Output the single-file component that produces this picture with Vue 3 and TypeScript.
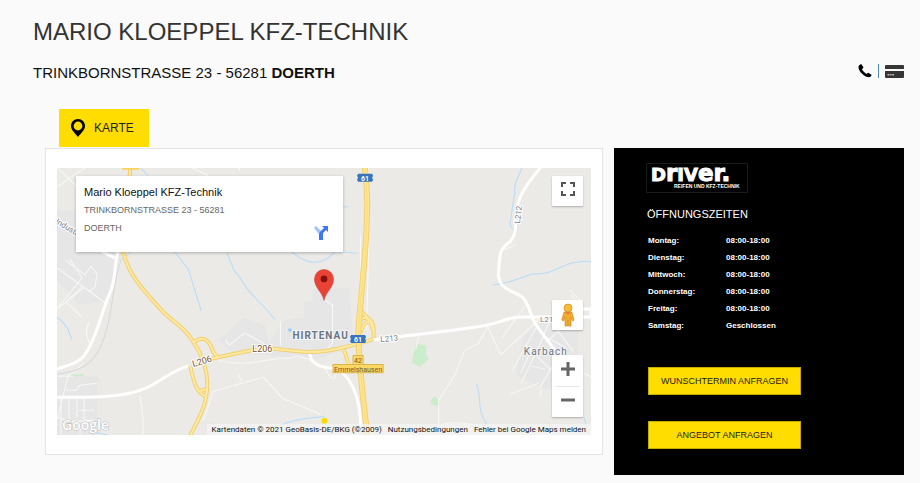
<script setup lang="ts">
interface OpeningTime {
  day: string
  time: string
}

const openingTimes: OpeningTime[] = [
  { day: 'Montag:', time: '08:00-18:00' },
  { day: 'Dienstag:', time: '08:00-18:00' },
  { day: 'Mittwoch:', time: '08:00-18:00' },
  { day: 'Donnerstag:', time: '08:00-18:00' },
  { day: 'Freitag:', time: '08:00-18:00' },
  { day: 'Samstag:', time: 'Geschlossen' },
]

const yellowRoads: string[] = [
  'M130 166C131 190 117 225 123 252C129 277 145 292 163 312C174 323 183 326 192 340C201 353 207 367 207 383C207 406 198 419 189 437',
  'M194 342C202 335 208 340 211 347C213 354 215 354 218 358',
  'M190 366C193 377 194 391 205 396M198 391L206 389',
  'M196 362C210 359 227 355 253 350C270 346 284 351 307 352C329 352 350 346 373 339',
  'M360 310C365 319 373 317 373 330V338M359 321C366 312 371 323 372 330M360 332C364 321 369 318 373 327',
  'M343 350C348 356 343 366 358 369',
]

const whiteRoads: string[] = [
  'M57 397H83C105 397 122 396 137 391C156 387 168 371 188 366',
  'M57 369C68 365 80 363 86 353C99 332 100 315 111 290C116 276 114 265 118 252',
  'M57 219C75 234 96 250 115 258',
  'M372 340C410 334 450 332 487 325C504 321 510 316 527 317H590V309H576',
  'M541 166C527 183 517 196 516 211C513 222 518 232 509 242C499 249 499 253 498 269C495 291 513 290 521 297C530 304 527 315 538 329L554 350',
  'M309 350C309 364 319 367 331 368C350 371 361 399 360 430',
]

const minorRoads: string[] = [
  'M57 187L85 168M57 168L96 204M57 268L92 293L105 303M65 260L85 275L91 266L97 274L95 287L89 292M57 309L82 278L70 259M57 309L84 288M82 287L66 302L82 317M89 322C83 336 89 339 90 345',
  'M57 376H73M57 420L68 376L84 363M61 399V434M69 398V421H95M77 398V417M84 397V420H94M66 390H76L80 385L97 383M79 410L94 410M57 417L80 424V434',
  'M140 395L143 420V435M203 420L213 391L263 377L282 398L320 414M238 374L241 381',
  'M225 340L229 345L244 333L263 343V351M218 360C246 368 266 358 289 358L296 356C307 358 319 363 326 370C329 379 336 382 336 370',
  'M323 299L332 305V343L326 350M280 321V346',
  'M360 235V275L357 305M368 168V250L366 330M192 168L208 176M239 168V171',
  'M418 335L415 349M487 327L500 355M487 327L477 344L464 350L454 375L438 400V427M435 427C451 419 464 424 479 425M569 290L580 301M500 251L515 245',
  'M500 355L538 319M525 305L501 338M535 328L511 371M551 315L540 342L520 384M552 324L572 351M570 320L545 342M570 295L582 309M543 336L564 347L551 367L539 387M524 344L549 369M509 394L538 383M531 348L520 373M563 350L552 371M540 389V397M530 366L544 369M576 369L590 377',
]

const streams: string[] = [
  'M140 168L148 176M173 250L188 269L201 311M226 251L234 271L240 278C248 294 257 298 275 320M289 250C305 265 321 267 334 252C344 251 352 254 357 253',
  'M341 207H348M521 168C516 181 513 184 514 193C511 208 510 222 509 224C510 230 514 229 514 231',
  'M492 285C507 284 516 279 531 274C550 275 557 267 571 263C580 262 585 260 590 262',
  'M476 384C482 404 475 407 486 424M583 417L586 428M57 317C66 324 68 328 72 340M213 423V435M280 425C297 418 304 419 324 416M95 432L108 435',
]
</script>

<template>
  <main class="page">
    <header class="heading">
      <h1>MARIO KLOEPPEL KFZ-TECHNIK</h1>
      <div class="subline">
        <p class="address">TRINKBORNSTRASSE 23 - 56281 <strong>DOERTH</strong></p>
        <div class="tools">
          <a href="#" aria-label="Telefon">
            <svg width="14" height="14" viewBox="0 0 14 14"><path d="M1.2 1.2C2.4.2 3.4-.1 3.8.7L5.3 3.2C5.7 3.9 4.4 4.6 3.9 5.1C4.8 7.2 6.6 9 8.7 9.9C9.3 9.5 9.9 8.4 10.7 8.9L13.1 10.4C13.9 10.9 13.4 11.8 12.8 12.5C11 14.4 6.3 12.3 4.1 9.8C1.7 7.4-.8 3.3 1.2 1.2Z" /></svg>
          </a>
          <span class="divider"></span>
          <a href="#" aria-label="Zahlungsarten">
            <svg width="19" height="13" viewBox="0 0 19 13"><path fill="#363636" d="M1 0h17q1 0 1 1v3H0V1q0-1 1-1ZM0 6h19v6q0 1-1 1H1q-1 0-1-1Z" /><path stroke="#bbb" stroke-width="1.5" d="M2.5 9.8h2M5.2 9.8h1.5M7.3 9.8H9" /></svg>
          </a>
        </div>
      </div>
    </header>

    <div class="columns">
      <section class="map-column">
        <button class="tab" type="button">
          <svg width="14" height="18" viewBox="0 0 14 18"><path fill-rule="evenodd" d="M7 0C3 0 0 3 0 7C0 11 4 14 7 18C10 14 14 11 14 7C14 3 11 0 7 0ZM7 2.6A4.4 4.4 0 1 1 7 11.4A4.4 4.4 0 1 1 7 2.6Z" /></svg>
          KARTE
        </button>
        <div class="map-card">
          <div class="map">
            <svg class="terrain" viewBox="57 168 533 267" preserveAspectRatio="xMidYMid slice">
              <path fill="#ebeae7" d="M57 168h533v267H57z" />
              <g fill="#e6e6e6">
                <path d="M57 210L100 216L123 252L105 301L80 305L57 280ZM57 376H98V435H57ZM218 341L243 318L265 325L268 344L284 320L304 318V301H312V289L349 288L353 347L314 360L290 357L232 353Z" />
                <path d="M522 337L551 313L577 328V384L545 389L515 375Z" />
              </g>
              <path fill="#cbedcc" d="M415 343L426 346L425 354L428 359L419 367L411 363ZM430 400L434 396L438 400V406L430 404ZM71 374h13v2H71Z" />
              <path v-for="d in streams" :key="d" class="stream" :d="d" />
              <path v-for="d in minorRoads" :key="d" class="minor" :d="d" />
              <path class="rail" d="M138 246L121 260C112 284 113 310 106 331C100 354 90 371 57 374" />
              <path v-for="d in whiteRoads" :key="d" class="white-road" :d="d" />
              <path v-for="d in yellowRoads" :key="d" class="road-edge" :d="d" />
              <path v-for="d in yellowRoads" :key="`${d}-fill`" class="road-fill" :d="d" />
              <path class="motorway-edge" d="M364 166C371 212 362 273 358 327C357 352 361 388 367 437" />
              <path class="motorway" d="M364 166C371 212 362 273 358 327C357 352 361 388 367 437" />
              <path class="motorway-line" d="M364 166C371 212 362 273 358 327C357 352 361 388 367 437" />
              <path fill="#f9d35e" d="M122 168h17v2h-17z" />
              <circle cx="289.500" cy="330" r="1.800" fill="#91ccff" />
              <g class="road-label">
                <text x="0" y="0" transform="translate(193 367) rotate(-17)">L206</text>
                <text x="252" y="352">L206</text>
                <text class="gray" transform="translate(380 342) rotate(-5)">L213</text>
                <text class="gray" x="539" y="322">L21</text>
                <text class="gray" transform="translate(519 224) rotate(-83)">L212</text>
                <text class="gray" transform="translate(55 223) rotate(32)">Industr.</text>
              </g>
              <text class="place bold" x="292" y="339">HIRTENAU</text>
              <text class="place" x="523" y="355">Karbach</text>
              <g class="shield">
                <path d="M357.500 174h14l1 2-1 2 1 2-1 2h-14l-1-2 1-2-1-2ZM350.500 335h14l1 2-1 2 1 2-1 2h-14l-1-2 1-2-1-2Z" />
                <text x="364.500" y="181">61</text>
                <text x="357.500" y="342">61</text>
              </g>
              <g class="exit">
                <path d="M352.500 355.500h10v9h-10zM332.500 364.500h50v8h-50z" />
                <text x="357.500" y="363">42</text>
                <text x="357.500" y="371.500">Emmelshausen</text>
              </g>
              <path fill="#ea4335" stroke="#c5372d" stroke-width=".5" d="M323.500 300.500C322 292 314 288 314 279A9.500 9.500 0 0 1 333 279C333 288 325 292 323.500 300.500Z" />
              <circle cx="323.500" cy="279" r="3.400" fill="#811411" />
              <circle cx="324" cy="420.500" r="3" fill="#ffdc00" />
              <text class="google" x="62" y="430">Google</text>
            </svg>

            <article class="info">
              <h2>Mario Kloeppel KFZ-Technik</h2>
              <p>TRINKBORNSTRASSE 23 - 56281</p>
              <p>DOERTH</p>
              <a class="directions" href="#" aria-label="Route">
                <svg width="14" height="14" viewBox="0 0 14 14"><path fill="#a1c2fa" d="M0 2L2 0L7 5L5 8Z" /><path fill="#3b78f7" d="M8 0H14V6L12 4L9 7V14H5V8Q5 6 10 2Z" /></svg>
              </a>
            </article>

            <button class="control fullscreen" type="button" aria-label="Vollbild">
              <svg width="14" height="14" viewBox="0 0 14 14" fill="none" stroke="#555" stroke-width="2"><path d="M1 5V1H5M9 1H13V5M13 9V13H9M5 13H1V9" /></svg>
            </button>
            <div class="lower-controls">
              <button class="control" type="button" aria-label="Street View">
                <svg width="14" height="24" viewBox="0 0 14 24"><path fill="#f2ad2e" stroke="#d18b20" stroke-width=".7" d="M3 9L10.800 9L13 17L11.500 18L10 14V23H7.500L7 17L6.500 23H4V14L2.500 18L.8 17Z" /><circle cx="7" cy="5" r="4" fill="#fbb936" stroke="#ca8b28" stroke-width=".7" /><path fill="#ef7d32" d="M4 9H10L7 12Z" /></svg>
              </button>
              <div class="zoom">
                <button type="button" aria-label="Vergrößern"><svg width="14" height="14" viewBox="0 0 14 14"><path d="M5.500 0h3v5.500H14v3H8.500V14h-3V8.500H0v-3h5.500Z" /></svg></button>
                <button type="button" aria-label="Verkleinern"><svg width="14" height="14" viewBox="0 0 14 14"><path d="M0 5.500h14v3H0Z" /></svg></button>
              </div>
            </div>
            <footer class="credits">
              <span>Kartendaten © 2021 GeoBasis-DE/BKG (©2009)</span>
              <a href="#">Nutzungsbedingungen</a>
              <a href="#">Fehler bei Google Maps melden</a>
            </footer>
          </div>
        </div>
      </section>

      <aside class="sidebar">
        <svg class="logo" width="102" height="30" viewBox="0 0 102 30" role="img" aria-label="Driver Reifen und KFZ-Technik">
          <path class="logo-frame" d="M.5.500h101v29H.500Z" />
          <text class="wordmark" x="5" y="18">D<tspan class="low">r</tspan>IV<tspan class="low">er.</tspan></text>
          <text class="tagline" x="28" y="25">REIFEN UND KFZ-TECHNIK</text>
        </svg>
        <h2>ÖFFNUNGSZEITEN</h2>
        <table>
          <tbody>
            <tr v-for="entry in openingTimes" :key="entry.day">
              <th scope="row">{{ entry.day }}</th>
              <td>{{ entry.time }}</td>
            </tr>
          </tbody>
        </table>
        <div class="actions">
          <button type="button">WUNSCHTERMIN ANFRAGEN</button>
          <button type="button">ANGEBOT ANFRAGEN</button>
        </div>
      </aside>
    </div>
  </main>
</template>

<style>
body {
  background: #fafafa;
}
</style>

<style scoped>
* {
  box-sizing: border-box;
}
.page {
  padding: 16px 16px 8px 33px;
  font-family: "Liberation Sans", Arial, sans-serif;
  color: #111;
}
h1, h2, p {
  margin: 0;
  font-weight: 400;
}
h1 {
  font-size: 24px;
  line-height: 32px;
  color: #333;
}
button {
  border: 0;
  padding: 0;
  font-family: inherit;
  cursor: pointer;
}
svg {
  display: block;
}
.subline {
  display: flex;
  justify-content: space-between;
  align-items: flex-start;
  padding-top: 13px;
}
.address {
  font-size: 15px;
  line-height: 24px;
}
.tools {
  display: flex;
  align-items: center;
  gap: 6px;
  padding-top: 3px;
}
.tools a {
  color: #000;
}
.divider {
  width: 1px;
  height: 14px;
  background: #4b87b9;
}
.columns {
  display: grid;
  grid-template-columns: minmax(0, 558fr) minmax(0, 290fr);
  gap: 11px;
  padding: 24px 0 0 12px;
  align-items: start;
}
.tab {
  display: flex;
  align-items: center;
  gap: 9px;
  height: 38px;
  margin: 0 0 1px 14px;
  padding: 0 15px 0 12px;
  background: #fd0;
  color: #222;
  font-size: 12px;
}
.map-card {
  padding: 19px 11px;
  border: 1px solid #e3e3e3;
  background: #fff;
}
.map {
  position: relative;
  aspect-ratio: 534 / 267;
  overflow: hidden;
}
.terrain {
  position: absolute;
  inset: 0;
  width: 100%;
  height: 100%;
  font-family: Roboto, sans-serif;
}
.terrain path {
  stroke-linejoin: round;
}
.stream, .minor, .rail, .white-road, .road-edge, .road-fill, .motorway, .motorway-edge, .motorway-line {
  fill: none;
}
.stream {
  stroke: #b5dcf8;
  stroke-width: 1;
}
.minor {
  stroke: #f8f8f6;
  stroke-width: 1;
}
.rail {
  stroke: #d5d7da;
  stroke-width: 1;
}
.white-road {
  stroke: #fff;
  stroke-width: 3;
}
.road-edge {
  stroke: #f1d06f;
  stroke-width: 4;
}
.road-fill {
  stroke: #ffe9a0;
  stroke-width: 2;
}
.motorway-edge {
  stroke: #f0d075;
  stroke-width: 6;
}
.motorway {
  stroke: #ffe58b;
  stroke-width: 4;
}
.motorway-line {
  stroke: #f8dc82;
  stroke-width: 1;
}
.road-label {
  font-size: 9px;
  fill: #7b552d;
  stroke: #fff;
  stroke-width: 2px;
  paint-order: stroke;
}
.road-label .gray {
  font-size: 8px;
  fill: #77818d;
}
.place {
  font-size: 10px;
  letter-spacing: 1px;
  fill: #687584;
  stroke: #f4f4f4;
  stroke-width: 2px;
  paint-order: stroke;
}
.bold {
  font-weight: 700;
}
.shield path {
  fill: #3974bd;
}
.shield text {
  font-size: 7px;
  font-weight: 700;
  fill: #fff;
  text-anchor: middle;
}
.exit path {
  fill: #fbd763;
  stroke: #d9b64d;
}
.exit text {
  font-size: 7px;
  fill: #755b25;
  text-anchor: middle;
}
.google {
  font-family: "Open Sans", sans-serif;
  font-size: 14px;
  font-weight: 600;
  fill: #fff;
  stroke: #bbb;
  stroke-width: 1px;
  paint-order: stroke;
}
.info {
  position: absolute;
  top: 8px;
  left: 19px;
  width: 267px;
  height: 76px;
  padding: 7px 8px;
  background: #fff;
  box-shadow: 0 1px 3px #0004;
}
.info h2 {
  font-size: 11px;
  line-height: 18px;
  color: #111;
}
.info p {
  font-size: 9px;
  line-height: 18px;
  color: #666;
}
.directions {
  position: absolute;
  right: 15px;
  bottom: 12px;
}
.control, .zoom {
  display: grid;
  width: 31px;
  place-items: center;
  background: #fff;
  border-radius: 1px;
  box-shadow: 0 1px 2px #0004;
}
.control {
  height: 30px;
}
.fullscreen {
  position: absolute;
  top: 8px;
  right: 8px;
  padding-bottom: 4px;
}
.lower-controls {
  position: absolute;
  right: 8px;
  bottom: 18px;
  display: grid;
  gap: 25px;
}
.zoom button {
  display: grid;
  place-items: center;
  width: 23px;
  height: 31px;
  padding-bottom: 4px;
  background: transparent;
  fill: #666;
}
.zoom button + button {
  border-top: 1px solid #e6e6e6;
}
.credits {
  position: absolute;
  right: 0;
  bottom: 0;
  display: flex;
  gap: 6px;
  padding: 0 5px;
  background: #f5f5f5b3;
  font-family: Roboto, sans-serif;
  font-size: 8px;
  line-height: 11px;
  white-space: nowrap;
}
.credits a {
  color: inherit;
  text-decoration: none;
}
.sidebar {
  margin-top: 39px;
  padding: 15px 32px 26px 32px;
  background: #000;
  color: #fff;
}
.logo {
  overflow: visible;
}
.logo-frame {
  fill: none;
  stroke: #1b1b1b;
}
.wordmark {
  font: 700 18px "DejaVu Sans", sans-serif;
  fill: #fff;
  stroke: #fff;
  stroke-width: 1px;
}
.low {
  font-size: 23px;
}
.tagline {
  font: 700 5px "Liberation Sans", sans-serif;
  fill: #fff;
}
.sidebar h2 {
  padding: 12px 0 9px 1px;
  font-size: 11px;
  line-height: 18px;
}
table {
  border-collapse: collapse;
  font-size: 8px;
  line-height: 17px;
  font-weight: 700;
}
th, td {
  padding: 0;
  text-align: left;
}
th {
  width: 80px;
  padding-left: 2px;
}
.actions {
  display: grid;
  gap: 26px;
  justify-items: start;
  padding: 33px 0 0 2px;
}
.actions button {
  width: 153px;
  height: 28px;
  border: 1px solid #c5ac00;
  background: #fd0;
  color: #221;
  font-size: 9px;
}
</style>
